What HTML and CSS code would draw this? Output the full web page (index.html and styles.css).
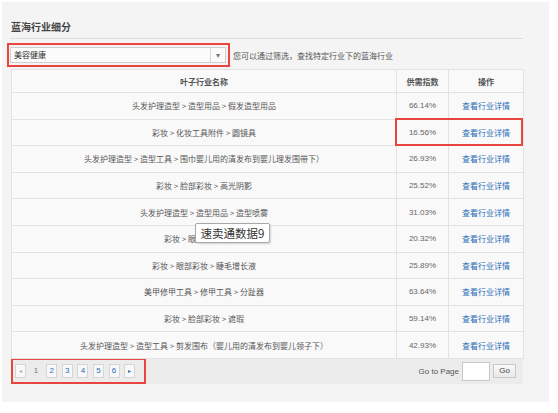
FILE: index.html
```html
<!DOCTYPE html>
<html lang="zh-CN">
<head>
<meta charset="utf-8">
<title>蓝海行业细分</title>
<link rel="stylesheet" href="styles.css">
</head>
<body>
<div class="panel">
  <div class="content">
    <h2 class="title">蓝海行业细分</h2>
    <div class="filter">
      <div class="select-mark">
        <div class="select">
          <span class="select-text">美容健康</span>
          <span class="select-arrow">▾</span>
        </div>
      </div>
      <span class="hint">您可以通过筛选，查找特定行业下的蓝海行业</span>
    </div>
    <div class="table-wrap">
      <table class="grid">
        <colgroup><col class="c1"><col class="c2"><col class="c3"></colgroup>
        <thead>
          <tr><th>叶子行业名称</th><th>供需指数</th><th>操作</th></tr>
        </thead>
        <tbody>
          <tr><td>头发护理造型 &gt; 造型用品 &gt; 假发造型用品</td><td class="num">66.14%</td><td><a>查看行业详情</a></td></tr>
          <tr><td>彩妆 &gt; 化妆工具附件 &gt; 圆镜具</td><td class="num">16.56%</td><td><a>查看行业详情</a></td></tr>
          <tr><td>头发护理造型 &gt; 造型工具 &gt; 围巾婴儿用的清发布到婴儿理发围带下）</td><td class="num">26.93%</td><td><a>查看行业详情</a></td></tr>
          <tr><td>彩妆 &gt; 脸部彩妆 &gt; 高光阴影</td><td class="num">25.52%</td><td><a>查看行业详情</a></td></tr>
          <tr><td>头发护理造型 &gt; 造型用品 &gt; 造型喷雾</td><td class="num">31.03%</td><td><a>查看行业详情</a></td></tr>
          <tr><td>彩妆 &gt; 眼部彩妆 &gt; 眼线</td><td class="num">20.32%</td><td><a>查看行业详情</a></td></tr>
          <tr><td>彩妆 &gt; 眼部彩妆 &gt; 睫毛增长液</td><td class="num">25.89%</td><td><a>查看行业详情</a></td></tr>
          <tr><td>美甲修甲工具 &gt; 修甲工具 &gt; 分趾器</td><td class="num">63.64%</td><td><a>查看行业详情</a></td></tr>
          <tr><td>彩妆 &gt; 脸部彩妆 &gt; 遮瑕</td><td class="num">59.14%</td><td><a>查看行业详情</a></td></tr>
          <tr><td>头发护理造型 &gt; 造型工具 &gt; 剪发围布（婴儿用的清发布到婴儿领子下）</td><td class="num">42.93%</td><td><a>查看行业详情</a></td></tr>
        </tbody>
      </table>
      <div class="row-mark"></div>
      <div class="tooltip">速卖通数据9</div>
    </div>
    <div class="pager">
      <div class="pages">
        <span class="pg pg-prev">◂</span>
        <span class="pg pg-cur">1</span>
        <span class="pg">2</span>
        <span class="pg">3</span>
        <span class="pg">4</span>
        <span class="pg">5</span>
        <span class="pg">6</span>
        <span class="pg pg-next">▸</span>
      </div>
      <div class="goto">
        <span class="goto-label">Go to Page</span>
        <span class="goto-input"></span>
        <span class="goto-btn">Go</span>
      </div>
    </div>
  </div>
</div>
</body>
</html>
```
FILE: styles.css
```css
html, body {
  margin: 0;
  padding: 0;
  background: #ffffff;
}
body {
  font-family: "Noto Sans CJK SC", "Noto Sans", sans-serif;
  color: #555;
}
.panel {
  margin: 2px 0 0 2px;
  width: 547px;
  height: 400px;
  background: #f4f4f4;
  box-sizing: border-box;
  padding-top: 1px;
}
.content {
  margin-left: 8px;
  width: 513px;
}
.title {
  margin: 0;
  padding: 17px 0 4px 1px;
  font-size: 10px;
  line-height: 14px;
  font-weight: bold;
  color: #444;
  border-bottom: 1px solid #dcdcdc;
}
.filter {
  display: flex;
  align-items: center;
  margin-top: 4px;
}
.select-mark {
  margin-left: -3px;
  border: 2px solid #e8463c;
  padding: 2px 2px 2px 1px;
}
.select {
  width: 216px;
  height: 16px;
  box-sizing: border-box;
  border: 1px solid #cfcfcf;
  background: #fbfbfb;
  display: flex;
  align-items: center;
}
.select-text {
  flex: 1;
  padding-left: 3px;
  font-size: 8px;
  line-height: 14px;
  color: #333;
}
.select-arrow {
  width: 14px;
  height: 14px;
  border-left: 1px solid #d8d8d8;
  font-size: 8px;
  line-height: 14px;
  text-align: center;
  color: #777;
}
.hint {
  margin-left: 3px;
  font-size: 8px;
  color: #555;
}
.table-wrap {
  position: relative;
  margin-top: 2px;
  margin-left: 1px;
  width: 512px;
}
.grid {
  width: 512px;
  border-collapse: collapse;
  table-layout: fixed;
  background: #f9f9f9;
}
.c1 { width: 385px; }
.c2 { width: 52px; }
.c3 { width: 75px; }
.grid th, .grid td {
  border: 1px solid #e3e3e3;
  padding: 0;
  text-align: center;
  font-size: 8px;
  white-space: nowrap;
  overflow: hidden;
}
.grid th {
  height: 23px;
  box-sizing: border-box;
  font-weight: bold;
  color: #555;
}
.grid td {
  height: 26.6px;
  box-sizing: border-box;
  color: #555;
}
.grid td.num {
  font-family: "Liberation Sans", Arial, sans-serif;
  color: #666;
}
.grid a {
  color: #2a6db8;
}
.row-mark {
  position: absolute;
  left: 384px;
  top: 49px;
  width: 128px;
  height: 28px;
  box-sizing: border-box;
  border: 2px solid #e8463c;
}
.tooltip {
  position: absolute;
  left: 184px;
  top: 154px;
  width: 75px;
  height: 20px;
  box-sizing: border-box;
  background: #ffffff;
  border: 1px solid #a8a8a8;
  border-radius: 2px;
  box-shadow: 1px 1px 2px rgba(0,0,0,0.15);
  font-size: 11.5px;
  line-height: 18px;
  text-align: center;
  color: #333;
}
.pager {
  display: flex;
  align-items: center;
  justify-content: space-between;
  height: 25px;
  margin-left: 1px;
  width: 512px;
  background: #ececec;
}
.pages {
  display: flex;
  align-items: center;
  gap: 4.6px;
  height: 26px;
  box-sizing: border-box;
  margin-top: -1px;
  border: 2px solid #e8463c;
  padding: 0 9px 0 2px;
}
.pg {
  width: 11px;
  height: 14px;
  box-sizing: border-box;
  border: 1px solid #d6d6d6;
  background: #f8f8f8;
  font-family: "Liberation Sans", Arial, sans-serif;
  font-size: 8px;
  line-height: 12px;
  text-align: center;
  color: #2a6db8;
}
.pg-prev {
  color: #aaa;
  font-size: 6px;
}
.pg-next {
  font-size: 6px;
}
.pg-cur {
  border-color: transparent;
  background: transparent;
  color: #777;
}
.goto {
  display: flex;
  align-items: center;
  padding-right: 7px;
}
.goto-label {
  font-family: "Liberation Sans", Arial, sans-serif;
  font-size: 8px;
  color: #555;
}
.goto-input {
  margin-left: 3px;
  width: 28px;
  height: 19px;
  box-sizing: border-box;
  border: 1px solid #c8c8c8;
  background: #fff;
}
.goto-btn {
  margin-left: 3px;
  width: 23px;
  height: 14px;
  box-sizing: border-box;
  border: 1px solid #c8c8c8;
  background: linear-gradient(#fafafa, #e8e8e8);
  font-family: "Liberation Sans", Arial, sans-serif;
  font-size: 8px;
  line-height: 12px;
  text-align: center;
  color: #444;
}
```
